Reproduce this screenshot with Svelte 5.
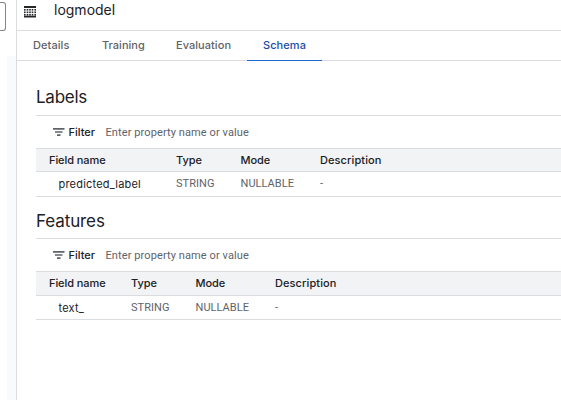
<script>
  const tabs = ['Details', 'Training', 'Evaluation', 'Schema'];
  const sections = [
    { title: 'Labels', kind: 'labels', field: 'predicted_label' },
    { title: 'Features', kind: 'features', field: 'text_' },
  ];
  const dotRows = [3, 5.5, 8];
  const dotColumns = [0, 2.7, 5.2, 7.7, 10.4];
</script>

<div class="page">
  <aside><div class="stub"></div><div class="rail"></div></aside>
  <main>
    <header>
      <svg width="12" height="12" viewBox="0 0 12 12">
        <path d="M0 0h12v2H0zM0 9.800h12v1.700H0z" fill="#25282b" />
        {#each dotRows as y}
          {#each dotColumns as x}
            <rect {x} {y} width="1.600" height="1.600" fill="#25282b" />
          {/each}
        {/each}
      </svg>
      <h1>logmodel</h1>
    </header>
    <nav>
      {#each tabs as tab}
        <button class:active={tab === 'Schema'} class={tab.toLowerCase()}>{tab}</button>
      {/each}
    </nav>
    {#each sections as s}
      <section class={s.kind}>
        <h2>{s.title}</h2>
        <div class="filter">
          <svg width="12" height="8" viewBox="0 0 12 8"><path d="M0 0h11.500v1.700H0zM2 3.150h7.500v1.700H2zM4 6.300h3.500V8H4z" fill="#5f6368" /></svg>
          <b>Filter</b>
          <span>Enter property name or value</span>
        </div>
        <div class="row head">
          <span>Field name</span><span>Type</span><span>Mode</span><span class="desc">Description</span>
        </div>
        <div class="row data">
          <span class="name">{s.field}</span><span>STRING</span><span>NULLABLE</span><span>-</span>
        </div>
      </section>
    {/each}
  </main>
</div>

<style>
  .page { display: flex; width: 561px; height: 400px; background: #fff; overflow: hidden; font-family: Inter, sans-serif; color: #202124; }
  .page * { box-sizing: border-box; }
  aside { width: 16px; flex: none; display: flex; flex-direction: column; }
  .stub { width: 6px; height: 29px; margin-top: 2px; border: 1px solid #80868b; border-left: 0; border-radius: 0 3px 3px 0; }
  .rail { flex: 1; margin: 25px 0 0 7px; background: #f8fafd; }
  main { flex: 1; min-width: 0; border-left: 1px solid #dadce0; }
  header { height: 31px; border-bottom: 1px solid #dadce0; display: flex; padding: 6px 0 0 7px; }
  header svg { flex: none; }
  h1 { margin: -6px 0 0 18px; font-size: 14px; line-height: 20px; font-weight: 400; letter-spacing: 0; }
  nav { height: 30px; border-bottom: 1px solid #dadce0; display: flex; }
  button { height: 30px; padding: 0 0 2px 16px; border: 0; background: none; font: 500 11px/28px Inter, sans-serif; color: #5f6368; text-align: left; white-space: nowrap; }
  .details { width: 69px; letter-spacing: 0.08px; }
  .training { width: 74px; letter-spacing: 0.03px; }
  .evaluation { width: 87px; letter-spacing: 0.05px; }
  .schema { width: 75px; letter-spacing: 0.08px; }
  .active { color: #174ea6; border-bottom: 1px solid #1967d2; }
  section { margin-left: 19px; }
  h2 { margin: 0; height: 54px; padding-top: 25px; font-size: 17px; line-height: 22px; font-weight: 400; letter-spacing: -0.25px; }
  .features h2 { height: 41px; padding-top: 13px; letter-spacing: -0.1px; }
  .filter { height: 34px; border: solid #dadce0; border-width: 1px 0; display: flex; align-items: center; padding-left: 16.5px; }
  .filter b { width: 37px; margin-left: 4px; font-size: 11px; font-weight: 500; letter-spacing: 0; }
  .filter span { font: 11px Roboto, sans-serif; color: #5f6368; letter-spacing: 0.1px; }
  .row { display: grid; grid-template-columns: 127px 64.500px 79.500px 1fr; padding-left: 13px; border-bottom: 1px solid #dadce0; white-space: nowrap; align-items: center; }
  .features .row { grid-template-columns: 82px 64.500px 79.500px 1fr; }
  .head { height: 23px; background: #f1f3f4; font-size: 11px; font-weight: 500; letter-spacing: -0.08px; }
  .desc { letter-spacing: 0.1px; }
  .features .head { height: 24px; padding-bottom: 1px; }
  .data { height: 25px; padding-bottom: 1px; font: 11px Roboto, sans-serif; color: #5f6368; letter-spacing: 0.04px; }
  .features .data { height: 24px; padding-bottom: 0; }
  .name { padding-left: 9.500px; font: 11px Inter, sans-serif; color: #202124; letter-spacing: 0.2px; }
</style>
